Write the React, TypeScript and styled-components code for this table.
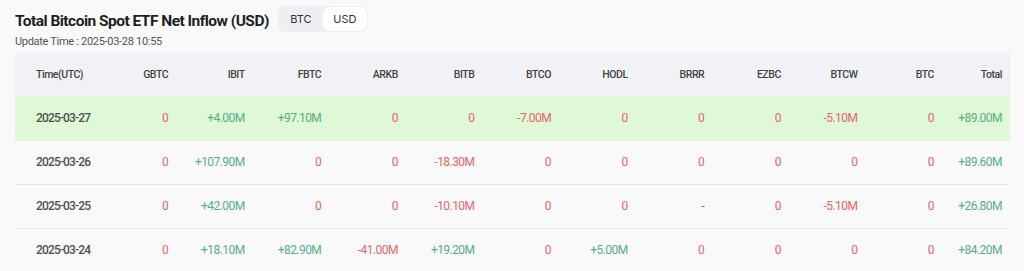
import type { FC } from "react";
import styled, { createGlobalStyle } from "styled-components";

const GlobalStyle = createGlobalStyle`
  html, body {
    margin: 0;
    padding: 0;
    background: #f9f9f9;
    font-family: Roboto, "Noto Sans", Arial, sans-serif;
    color: #333;
  }
`;

const Page = styled.div`
  padding: 6px 15px 0 15px;
  width: 994px;
`;

const HeaderBar = styled.div`
  display: flex;
  align-items: flex-start;
  gap: 9px;
`;

const TitleBlock = styled.div`
  display: flex;
  flex-direction: column;
`;

const Title = styled.h1`
  margin: 6px 0 0 0;
  font-family: Roboto, Inter, sans-serif;
  font-size: 15.5px;
  font-weight: 700;
  letter-spacing: -0.52px;
  line-height: 19px;
  color: #1e1e1e;
`;

const UpdateTime = styled.div`
  margin-top: 3px;
  font-size: 11px;
  line-height: 15px;
  color: #555;
  letter-spacing: -0.3px;
`;

const Toggle = styled.div`
  display: flex;
  padding: 1px;
  border-radius: 8px;
  background: #eeeff2;
  height: 24px;
  width: 88px;
`;

const ToggleOption = styled.button<{ $active?: boolean }>`
  flex: 1;
  border: none;
  border-radius: 7px;
  background: ${({ $active }) => ($active ? "#ffffff" : "transparent")};
  font-family: Inter, Roboto, sans-serif;
  font-size: 11px;
  color: #333;
  padding: 0;
  cursor: pointer;
`;

const Table = styled.table`
  margin-top: 3px;
  width: 994px;
  border-collapse: collapse;
  table-layout: fixed;
`;

const HeadRow = styled.tr`
  background: #f1f2f6;
  height: 44px;
`;

const HeadCell = styled.th<{ $left?: boolean }>`
  padding: ${({ $left }) => ($left ? "0 0 0 21px" : "0 8px 0 0")};
  text-align: ${({ $left }) => ($left ? "left" : "right")};
  font-family: Roboto, sans-serif;
  font-size: 10.5px;
  font-weight: 500;
  color: #444;
  letter-spacing: -0.45px;
`;

const Row = styled.tr<{ $highlight?: boolean }>`
  height: 44px;
  background: ${({ $highlight }) => ($highlight ? "#dff8d5" : "#f9f9f9")};
  border-top: 1px solid #e9e9e9;
  &:first-child {
    border-top: none;
  }
`;

const Cell = styled.td<{ $tone: "up" | "down" | "none" | "date" }>`
  padding: ${({ $tone }) => ($tone === "date" ? "0 0 0 21px" : "0 8px 0 0")};
  text-align: ${({ $tone }) => ($tone === "date" ? "left" : "right")};
  font-size: 12px;
  font-weight: ${({ $tone }) => ($tone === "date" ? 500 : 400)};
  letter-spacing: ${({ $tone }) => ($tone === "date" ? "-0.85px" : "-0.55px")};
  color: ${({ $tone }) =>
    $tone === "up"
      ? "#56ae88"
      : $tone === "down"
        ? "#e6646b"
        : $tone === "date"
          ? "#505050"
          : "#777"};
`;

const columns = [
  "GBTC",
  "IBIT",
  "FBTC",
  "ARKB",
  "BITB",
  "BTCO",
  "HODL",
  "BRRR",
  "EZBC",
  "BTCW",
  "BTC",
  "Total",
];

const rows: { date: string; values: string[]; highlight?: boolean }[] = [
  {
    date: "2025-03-27",
    highlight: true,
    values: ["0", "+4.00M", "+97.10M", "0", "0", "-7.00M", "0", "0", "0", "-5.10M", "0", "+89.00M"],
  },
  {
    date: "2025-03-26",
    values: ["0", "+107.90M", "0", "0", "-18.30M", "0", "0", "0", "0", "0", "0", "+89.60M"],
  },
  {
    date: "2025-03-25",
    values: ["0", "+42.00M", "0", "0", "-10.10M", "0", "0", "-", "0", "-5.10M", "0", "+26.80M"],
  },
  {
    date: "2025-03-24",
    values: ["0", "+18.10M", "+82.90M", "-41.00M", "+19.20M", "0", "+5.00M", "0", "0", "0", "0", "+84.20M"],
  },
];

const toneOf = (v: string): "up" | "down" | "none" => {
  if (v.startsWith("+")) return "up";
  if (v === "-") return "none";
  return "down";
};

const colWidths = [84.5, ...Array(11).fill(76.6), 67.9];

const InflowTable: FC = () => (
  <Table>
    <colgroup>
      {colWidths.map((w, i) => (
        <col key={i} style={{ width: `${w}px` }} />
      ))}
    </colgroup>
    <thead>
      <HeadRow>
        <HeadCell $left>Time(UTC)</HeadCell>
        {columns.map((c) => (
          <HeadCell key={c}>{c}</HeadCell>
        ))}
      </HeadRow>
    </thead>
    <tbody>
      {rows.map((r) => (
        <Row key={r.date} $highlight={r.highlight}>
          <Cell $tone="date">{r.date}</Cell>
          {r.values.map((v, i) => (
            <Cell key={i} $tone={toneOf(v)}>
              {v}
            </Cell>
          ))}
        </Row>
      ))}
    </tbody>
  </Table>
);

const App: FC = () => (
  <>
    <GlobalStyle />
    <Page>
      <HeaderBar>
        <TitleBlock>
          <Title>Total Bitcoin Spot ETF Net Inflow (USD)</Title>
          <UpdateTime>Update Time : 2025-03-28 10:55</UpdateTime>
        </TitleBlock>
        <Toggle>
          <ToggleOption>BTC</ToggleOption>
          <ToggleOption $active>USD</ToggleOption>
        </Toggle>
      </HeaderBar>
      <InflowTable />
    </Page>
  </>
);

export default App;
